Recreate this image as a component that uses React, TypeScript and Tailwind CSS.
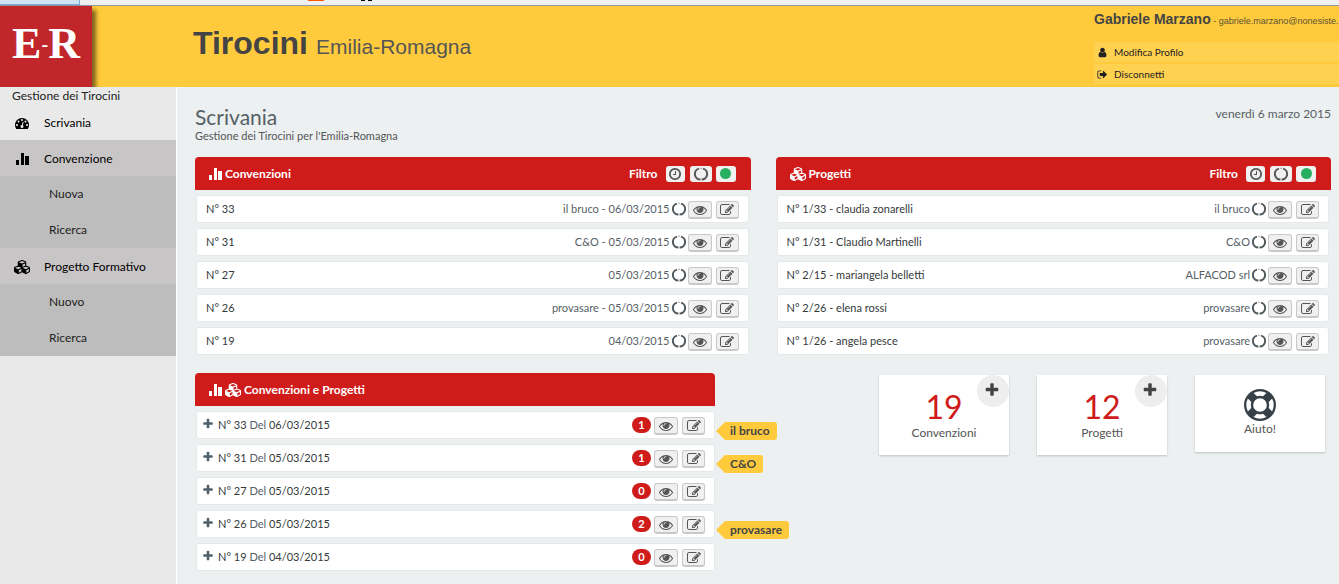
import React from "react";
import { FaCubes } from "react-icons/fa";

const ICONS = {
  eye: "M1664 960q-152-236-381-353 61 104 61 225 0 185-131.5 316.5t-316.5 131.5-316.5-131.5-131.5-316.5q0-121 61-225-229 117-381 353 133 205 333.5 326.5t434.5 121.5 434.5-121.5 333.5-326.5zm-720-384q0-20-14-34t-34-14q-125 0-214.5 89.5t-89.5 214.5q0 20 14 34t34 14 34-14 14-34q0-86 61-147t147-61q20 0 34-14t14-34zm848 384q0 34-20 69-140 230-376.5 368.5t-499.5 138.5-499.5-139-376.5-368q-20-35-20-69t20-69q140-229 376.5-368t499.5-139 499.5 139 376.5 368q20 35 20 69z",
  edit: "M888 1184l116-116-152-152-116 116v56h96v96h56zm440-720q-16-16-33 1l-350 350q-17 17-1 33t33-1l350-350q17-17 1-33zm80 594v190q0 119-84.5 203.5t-203.5 84.5h-832q-119 0-203.5-84.5t-84.5-203.5v-832q0-119 84.5-203.5t203.5-84.5h832q63 0 117 25 15 7 18 23 3 17-9 29l-49 49q-14 14-32 8-23-6-45-6h-832q-66 0-113 47t-47 113v832q0 66 47 113t113 47h832q66 0 113-47t47-113v-126q0-13 9-22l64-64q15-15 35-7t20 29zm-96-738l288 288-672 672h-288v-288zm444 132l-92 92-288-288 92-92q28-28 68-28t68 28l152 152q28 28 28 68t-28 68z",
  clock: "M1024 544v448q0 14-9 23t-23 9h-320q-14 0-23-9t-9-23v-64q0-14 9-23t23-9h224v-352q0-14 9-23t23-9h64q14 0 23 9t9 23zm416 352q0-148-73-273t-198-198-273-73-273 73-198 198-73 273 73 273 198 198 273 73 273-73 198-198 73-273zm224 0q0 209-103 385.5t-279.5 279.5-385.5 103-385.5-103-279.5-279.5-103-385.5 103-385.5 279.5-279.5 385.5-103 385.5 103 279.5 279.5 103 385.5z",
  plus: "M1600 736v192q0 40-28 68t-68 28h-416v416q0 40-28 68t-68 28h-192q-40 0-68-28t-28-68v-416h-416q-40 0-68-28t-28-68v-192q0-40 28-68t68-28h416v-416q0-40 28-68t68-28h192q40 0 68 28t28 68v416h416q40 0 68 28t28 68z",
  ring: "M896 0q182 0 348 71t286 191 191 286 71 348-71 348-191 286-286 191-348 71-348-71-286-191-191-286-71-348 71-348 191-286 286-191 348-71zm0 128q-190 0-361 90l194 194q82-28 167-28t167 28l194-194q-171-90-361-90zm-678 1129l194-194q-28-82-28-167t28-167l-194-194q-90 171-90 361t90 361zm678 407q190 0 361-90l-194-194q-82 28-167 28t-167-28l-194 194q171 90 361 90zm0-384q159 0 271.5-112.5t112.5-271.5-112.5-271.5-271.5-112.5-271.5 112.5-112.5 271.5 112.5 271.5 271.5 112.5zm484-217l194 194q90-171 90-361t-90-361l-194 194q28 82 28 167t-28 167z",
  user: "M1536 1399q0 109-62.5 187t-150.5 78h-854q-88 0-150.5-78t-62.5-187q0-85 8.5-160.5t31.5-152 58.5-131 94-89 134.5-34.5q131 128 313 128t313-128q76 0 134.5 34.5t94 89 58.5 131 31.5 152 8.5 160.5zm-256-887q0 159-112.5 271.5t-271.5 112.5-271.5-112.5-112.5-271.5 112.5-271.5 271.5-112.5 271.5 112.5 112.5 271.5z",
  signOut:
    "M704 1440q0 4 1 20t.5 26.5-3 23.5-10 19.5-20.5 6.5h-320q-119 0-203.5-84.5t-84.5-203.5v-704q0-119 84.5-203.5t203.5-84.5h320q13 0 22.5 9.5t9.5 22.5q0 4 1 20t.5 26.5-3 23.5-10 19.5-20.5 6.5h-320q-66 0-113 47t-47 113v704q0 66 47 113t113 47h312l11.5 1 11.5 3 8 5.5 7 9 2 13.5zm928-544q0 26-19 45l-544 544q-19 19-45 19t-45-19-19-45v-288h-448q-26 0-45-19t-19-45v-384q0-26 19-45t45-19h448v-288q0-26 19-45t45-19 45 19l544 544q19 19 19 45z",
  dashboard:
    "M384 1152q0-53-37.5-90.5t-90.5-37.5-90.5 37.5-37.5 90.5 37.5 90.5 90.5 37.5 90.5-37.5 37.5-90.5zm192-448q0-53-37.5-90.5t-90.5-37.5-90.5 37.5-37.5 90.5 37.5 90.5 90.5 37.5 90.5-37.5 37.5-90.5zm428 481l101-382q6-26-7.5-48.5t-38.5-29.5-48 6.5-30 39.5l-101 382q-60 5-107 43.5t-63 98.5q-20 77 20 146t117 89 146-20 89-117q16-60-6-117t-72-91zm660-33q0-53-37.5-90.5t-90.5-37.5-90.5 37.5-37.5 90.5 37.5 90.5 90.5 37.5 90.5-37.5 37.5-90.5zm-640-640q0-53-37.5-90.5t-90.5-37.5-90.5 37.5-37.5 90.5 37.5 90.5 90.5 37.5 90.5-37.5 37.5-90.5zm448 192q0-53-37.5-90.5t-90.5-37.5-90.5 37.5-37.5 90.5 37.5 90.5 90.5 37.5 90.5-37.5 37.5-90.5zm320 448q0 261-141 483-19 29-54 29h-1402q-35 0-54-29-141-221-141-483 0-182 71-348t191-286 286-191 348-71 348 71 286 191 191 286 71 348z",
};

interface IconProps {
  name: keyof typeof ICONS;
  className?: string;
}

const Icon: React.FC<IconProps> = ({ name, className = "size-3" }) => (
  <svg viewBox="0 0 1792 1792" fill="currentColor" aria-hidden="true" className={`shrink-0 ${className}`}>
    <path d={ICONS[name]} />
  </svg>
);

const BarsIcon = () => (
  <svg viewBox="0 0 13 12" fill="currentColor" aria-hidden="true" className="w-[13px] h-3 shrink-0">
    <path d="M0 7h3v5H0zM5 0h3v12H5zM9 3h4v9H9z" />
  </svg>
);

const StatusIcon = () => (
  <svg viewBox="0 0 14 14" fill="none" stroke="currentColor" strokeWidth="2" aria-hidden="true" className="size-[14px] shrink-0">
    <path d="M9 1.6A5.6 5.6 0 0 1 7.6 12.6M6.4 12.6A5.6 5.6 0 0 1 5 1.6" />
    <path d="M6.6 1.4h.8" strokeWidth="1.4" />
  </svg>
);

const buttonClass =
  "mt-0.5 flex h-[15px] items-center justify-center rounded-[3px] border border-[#c8c8c8] border-b-2 bg-[#f0f0f0] text-[#555] box-content";

const RowButtons = () => (
  <>
    <button type="button" aria-label="Visualizza" className={`${buttonClass} ml-0.5 w-[22px]`}>
      <Icon name="eye" className="size-[14px]" />
    </button>
    <button type="button" aria-label="Modifica" className={`${buttonClass} ml-1 w-[21px]`}>
      <Icon name="edit" className="size-[14px]" />
    </button>
  </>
);

const filterClass = "flex h-4 items-center justify-center rounded-[3px] bg-[#f0f0f0] text-[#555]";

const Filtro = () => (
  <div className="ml-auto flex items-center">
    <span className="mr-2">Filtro</span>
    <button type="button" aria-label="In attesa" className={`${filterClass} mr-[5px] w-[19px]`}>
      <Icon name="clock" className="size-[14px]" />
    </button>
    <button type="button" aria-label="In corso" className={`${filterClass} mr-1 w-[22px]`}>
      <StatusIcon />
    </button>
    <button type="button" aria-label="Completati" className={`${filterClass} w-5`}>
      <span className="size-[11px] rounded-full bg-[#27ae60]" />
    </button>
  </div>
);

interface PanelProps {
  title: string;
  icons: React.ReactNode;
  filtro?: boolean;
  children: React.ReactNode;
}

const Panel: React.FC<PanelProps> = ({ title, icons, filtro = false, children }) => (
  <section>
    <div className="flex h-[33px] items-center gap-[3px] rounded-t-sm bg-[#cf1c1a] pr-[15px] pl-[14px] text-[12px] font-bold text-white">
      {icons}
      <h2>{title}</h2>
      {filtro && <Filtro />}
    </div>
    <ul className={`mt-[5px] flex flex-col gap-[5px] pl-px ${filtro ? "pr-0.5" : ""}`}>{children}</ul>
  </section>
);

const rowClass =
  "relative flex h-7 items-center rounded-[3px] border border-[#e6e9ea] bg-white px-[9px] text-[11px] text-[#34393c]";

const convenzioni = [
  { numero: "33", info: "il bruco - 06/03/2015" },
  { numero: "31", info: "C&O - 05/03/2015" },
  { numero: "27", info: "05/03/2015" },
  { numero: "26", info: "provasare - 05/03/2015" },
  { numero: "19", info: "04/03/2015" },
];

const progetti = [
  { numero: "1/33 - claudia zonarelli", info: "il bruco" },
  { numero: "1/31 - Claudio Martinelli", info: "C&O" },
  { numero: "2/15 - mariangela belletti", info: "ALFACOD srl" },
  { numero: "2/26 - elena rossi", info: "provasare" },
  { numero: "1/26 - angela pesce", info: "provasare" },
];

const riepilogo = [
  { numero: "33", data: "06/03/2015", totale: 1, azienda: "il bruco" },
  { numero: "31", data: "05/03/2015", totale: 1, azienda: "C&O" },
  { numero: "27", data: "05/03/2015", totale: 0 },
  { numero: "26", data: "05/03/2015", totale: 2, azienda: "provasare" },
  { numero: "19", data: "04/03/2015", totale: 0 },
];

const Row: React.FC<{ numero: string; info: string }> = ({ numero, info }) => (
  <li className={rowClass}>
    <span>N° {numero}</span>
    <span className="mr-0.5 ml-auto text-[#556066]">{info}</span>
    <span className="text-[#50585c]">
      <StatusIcon />
    </span>
    <RowButtons />
  </li>
);

const Callout: React.FC<{ text: string }> = ({ text }) => (
  <div className="absolute top-[10px] left-full ml-0.5 flex items-center text-[12px] font-bold text-[#444]">
    <svg viewBox="0 0 9 18" aria-hidden="true" className="h-[18px] w-[9px]">
      <path d="M0 9L9 0v18z" fill="#ffcb3c" />
    </svg>
    <span className="h-[18px] rounded-r-[3px] bg-[#ffcb3c] pr-[7px] pl-[5px] leading-[18px] whitespace-nowrap">{text}</span>
  </div>
);

interface CardProps {
  numero: number;
  label: string;
}

const Card: React.FC<CardProps> = ({ numero, label }) => (
  <div className="relative h-20 w-[130px] bg-white text-center shadow-[0_1px_2px_rgba(0,0,0,0.2)]">
    <button
      type="button"
      aria-label={`Aggiungi ${label}`}
      className="absolute top-0 right-0 flex size-8 items-center justify-center rounded-full bg-[#eee] pr-0.5 pb-0.5 text-[#444]"
    >
      <Icon name="plus" className="size-4" />
    </button>
    <p className="pt-4 text-[32px] leading-8 text-[#cf1c1a]">{numero}</p>
    <p className="pt-0.5 text-[12px] leading-4 text-[#555]">{label}</p>
  </div>
);

const MenuItem: React.FC<{ icon: React.ReactNode; label: string; active?: boolean }> = ({ icon, label, active = false }) => (
  <a
    href="#"
    className={`flex h-9 items-center pt-0.5 pl-[13px] text-[12px] text-black ${active ? "bg-[#c8c5c6]" : ""}`}
  >
    <span className="flex w-[18px] justify-center">{icon}</span>
    <span className="ml-[13px]">{label}</span>
  </a>
);

const SubMenu: React.FC<{ items: string[] }> = ({ items }) => (
  <div className="bg-[#bdbdbd]">
    {items.map((item) => (
      <a key={item} href="#" className="flex h-9 items-center pl-[49px] text-[12px] text-[#222]">
        {item}
      </a>
    ))}
  </div>
);

const App = () => {
  return (
    <div className="flex min-h-screen flex-col bg-[#ecf0f1] font-['Lato','Noto_Sans',sans-serif]">
      <div className="flex h-1.5 items-start border-b border-[#8e9aa8] bg-[#f0f0f0]">
        <div className="h-[5px] w-20 border-r border-b border-[#7aa7d8] bg-[#cfe3f7]" />
        <div className="ml-[228px] h-px w-4 bg-[#ff5a00]" />
        <div className="ml-[37px] h-px w-1 bg-black" />
        <div className="ml-[3px] h-px w-1 bg-black" />
      </div>

      <header className="flex h-[81px] bg-[#ffcb3c] font-['Liberation_Sans',sans-serif]">
        <a
          href="#"
          aria-label="E-R"
          className="flex w-[92px] shrink-0 items-center justify-center bg-[#c1272a] pb-1.5 font-['Liberation_Serif',serif] text-[44px] font-bold text-white shadow-[4px_4px_4px_rgba(0,0,0,0.5)]"
        >
          <span>E</span>
          <span className="text-[20px]">-</span>
          <span>R</span>
        </a>
        <h1 className="ml-[101px] flex items-baseline pt-[17px] text-[32px] leading-10 font-bold text-[#444]">
          Tirocini
          <small className="ml-2 text-[21px] font-normal text-[#555]">Emilia-Romagna</small>
        </h1>
        <div className="ml-auto w-[245px] overflow-hidden whitespace-nowrap">
          <p className="h-9 pt-1 text-[9px] leading-[18px] text-[#5c5236]">
            <b className="text-[14px] text-[#444]">Gabriele Marzano</b> - gabriele.marzano@nonesiste.
          </p>
          <nav className="flex flex-col gap-0.5 font-['Lato','Noto_Sans',sans-serif] text-[10px] text-[#222]">
            <a href="#" className="flex h-5 items-center gap-1.5 bg-[#ffd150] pl-[3px]">
              <Icon name="user" className="size-[11px]" />
              Modifica Profilo
            </a>
            <a href="#" className="flex h-5 items-center gap-1.5 bg-[#ffd150] pl-[3px]">
              <Icon name="signOut" className="size-[11px]" />
              Disconnetti
            </a>
          </nav>
        </div>
      </header>

      <div className="flex grow">
        <nav className="w-[177px] shrink-0 border-r border-white bg-[#e9e9e9]">
          <p className="pl-3 text-[12px] leading-[17px] text-[#222]">Gestione dei Tirocini</p>
          <MenuItem icon={<Icon name="dashboard" className="size-[14px]" />} label="Scrivania" />
          <MenuItem active icon={<BarsIcon />} label="Convenzione" />
          <SubMenu items={["Nuova", "Ricerca"]} />
          <MenuItem active icon={<FaCubes size={16} />} label="Progetto Formativo" />
          <SubMenu items={["Nuovo", "Ricerca"]} />
        </nav>

        <main className="min-w-0 grow pt-4 pr-2 pl-[18px]">
          <div className="flex h-[54px] justify-between text-[#556066]">
            <div>
              <h2 className="text-[21px] leading-[27px]">Scrivania</h2>
              <p className="text-[11px] leading-3 text-[#555]">Gestione dei Tirocini per l'Emilia-Romagna</p>
            </div>
            <p className="text-[12px] leading-[22px]">venerdì 6 marzo 2015</p>
          </div>

          <div className="grid grid-cols-2 gap-x-[25px]">
            <Panel title="Convenzioni" icons={<BarsIcon />} filtro>
              {convenzioni.map((c) => (
                <Row key={c.numero} {...c} />
              ))}
            </Panel>
            <Panel title="Progetti" icons={<FaCubes size={16} />} filtro>
              {progetti.map((p) => (
                <Row key={p.numero} {...p} />
              ))}
            </Panel>
          </div>

          <div className="mt-[18px] grid grid-cols-[520fr_616fr]">
            <Panel
              title="Convenzioni e Progetti"
              icons={
                <>
                  <BarsIcon />
                  <FaCubes size={16} />
                </>
              }
            >
              {riepilogo.map((r) => (
                <li key={r.numero} className={rowClass}>
                  <button type="button" aria-label="Espandi" className="-ml-1 mr-1 pb-0.5 text-[#50606a]">
                    <Icon name="plus" />
                  </button>
                  <span>
                    N° {r.numero} <span className="text-[#556066]">Del</span> {r.data}
                  </span>
                  <span className="mr-px ml-auto flex h-4 w-[19px] items-center justify-center rounded-full bg-[#cf1c1a] font-bold text-white">
                    {r.totale}
                  </span>
                  <RowButtons />
                  {r.azienda && <Callout text={r.azienda} />}
                </li>
              ))}
            </Panel>
            <div className="flex items-start justify-end gap-7 pt-0.5 pr-1.5">
              <Card numero={19} label="Convenzioni" />
              <Card numero={12} label="Progetti" />
              <a
                href="#"
                className="flex h-[77px] w-[130px] flex-col items-center bg-white pt-3.5 text-[12px] leading-4 text-[#555] shadow-[0_1px_2px_rgba(0,0,0,0.2)]"
              >
                <Icon name="ring" className="size-8 text-[#364046]" />
                Aiuto!
              </a>
            </div>
          </div>
        </main>
      </div>
    </div>
  );
};

export default App;
